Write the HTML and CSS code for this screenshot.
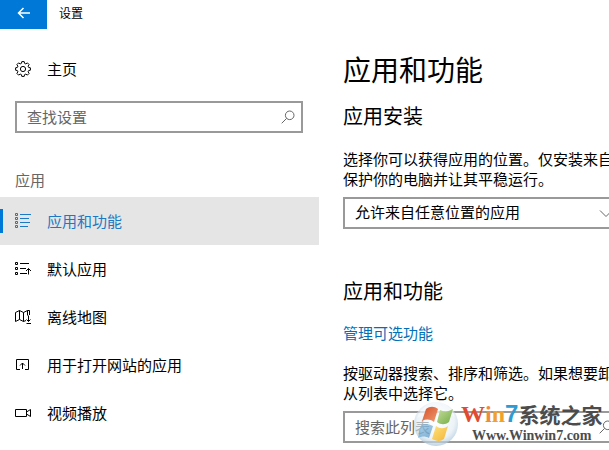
FILE: index.html
```html
<!DOCTYPE html>
<html lang="zh-CN">
<head>
<meta charset="utf-8">
<title>设置</title>
<link rel="stylesheet" href="styles.css">
</head>
<body>
<div class="window">
  <aside class="sidebar">
    <header class="titlebar">
      <button class="back" type="button" aria-label="返回">
        <svg width="14" height="14" viewBox="0 0 14 14"><path d="M13 7H1.500M6.500 2L1.500 7l5 5"/></svg>
      </button>
      <span class="window-title">设置</span>
    </header>
    <a class="nav-item home" href="#">
      <svg class="icon" width="16" height="16" viewBox="0 0 16 16"><path d="M6.800.6h2.400l.4 1.800 1.200.5 1.600-1 1.700 1.700-1 1.600.5 1.200 1.800.4v2.400l-1.800.4-.5 1.200 1 1.600-1.700 1.700-1.600-1-1.200.5-.4 1.800H6.800l-.4-1.800-1.200-.5-1.600 1-1.700-1.700 1-1.600-.5-1.200-1.800-.4V6.800l1.800-.4.5-1.200-1-1.600 1.700-1.700 1.600 1 1.200-.5z"/><circle cx="8" cy="8" r="2.600"/></svg>
      <span>主页</span>
    </a>
    <div class="field find">
      <input type="text" placeholder="查找设置" aria-label="查找设置">
      <svg class="field-icon" width="14" height="14" viewBox="0 0 14 14"><circle cx="8.700" cy="5.300" r="4.300"/><path d="M5.700 8.300L.7 13.300"/></svg>
    </div>
    <h3 class="group">应用</h3>
    <nav>
      <a class="nav-item active" href="#" aria-current="page">
        <svg class="icon" width="16" height="16" viewBox="0 0 16 16"><path d="M.5.5h2v2h-2zM.5 4.500h2v2h-2zM.5 8.500h2v2h-2zM.5 12.500h2v2h-2zM5 1.500H16M5 5.500h9M5 9.500h10M5 13.500h8"/></svg>
        <span>应用和功能</span>
      </a>
      <a class="nav-item" href="#">
        <svg class="icon" width="16" height="16" viewBox="0 0 16 16"><path d="M.5 1.500h2v2h-2zM.5 6.500h2v2h-2zM.5 11.500h2v2h-2zM5 2.500h9M5 7.500h6M5 12.500h7M13.500 13.500v-6M11 10l2.500-2.500L16 10"/></svg>
        <span>默认应用</span>
      </a>
      <a class="nav-item" href="#">
        <svg class="icon" width="16" height="16" viewBox="0 0 16 16"><path d="M11 11.500L8.500 12.500l-4-2-4 2v-9l4-2 4 2 4-2v5M4.500 1.500v9M8.500 3.500v9M13.500 6.500v6M14.500 6V1.500h-2M11.500 10.500l2 2 2-2M11.500 14.500H16"/></svg>
        <span>离线地图</span>
      </a>
      <a class="nav-item" href="#">
        <svg class="icon" width="16" height="16" viewBox="0 0 16 16"><path d="M5 12.500H1.500v-10h12v10H10M7.500 12v-6M5 8.500L7.500 6 10 8.500"/></svg>
        <span>用于打开网站的应用</span>
      </a>
      <a class="nav-item" href="#">
        <svg class="icon" width="16" height="16" viewBox="0 0 16 16"><path d="M.5 4.500h11v7H.5zM11.500 7l4-2.500v7l-4-2.500"/></svg>
        <span>视频播放</span>
      </a>
    </nav>
  </aside>
  <main class="content">
    <h1>应用和功能</h1>
    <section class="install">
      <h2><label for="source">应用安装</label></h2>
      <p>选择你可以获得应用的位置。仅安装来自<br>保护你的电脑并让其平稳运行。</p>
      <div class="field">
        <select id="source"><option>允许来自任意位置的应用</option></select>
        <svg class="field-icon" width="14" height="14" viewBox="0 0 14 14"><path d="M1 4.500l6 6 6-6"/></svg>
      </div>
    </section>
    <section class="features">
      <h2>应用和功能</h2>
      <a class="link" href="#">管理可选功能</a>
      <p>按驱动器搜索、排序和筛选。如果想要卸<br>从列表中选择它。</p>
      <div class="field">
        <input type="text" placeholder="搜索此列表" aria-label="搜索此列表">
        <svg class="field-icon" width="14" height="14" viewBox="0 0 14 14"><circle cx="8.700" cy="5.300" r="4.300"/><path d="M5.700 8.300L.7 13.300"/></svg>
      </div>
    </section>
  </main>
  <div class="watermark">
    <svg class="orb" width="48" height="48" viewBox="0 0 48 48">
      <defs>
        <radialGradient id="glass" cx="50%" cy="42%" r="60%"><stop offset="0" stop-color="#fff" stop-opacity=".5"/><stop offset=".7" stop-color="#dfeaf2" stop-opacity=".6"/><stop offset="1" stop-color="#9fbfd6" stop-opacity=".75"/></radialGradient>
        <linearGradient id="red" x2="1" y2="1"><stop offset="0" stop-color="#d4512b"/><stop offset="1" stop-color="#f09a70"/></linearGradient>
        <linearGradient id="green" x2="1" y2="1"><stop offset="0" stop-color="#c5dc9c"/><stop offset="1" stop-color="#72ad43"/></linearGradient>
        <linearGradient id="blue" x2="1" y2="1"><stop offset="0" stop-color="#80bce2"/><stop offset="1" stop-color="#357fb8"/></linearGradient>
        <linearGradient id="yellow" x2="1" y2="1"><stop offset="0" stop-color="#ffe27a"/><stop offset="1" stop-color="#f2b53b"/></linearGradient>
      </defs>
      <circle cx="23" cy="24" r="22" fill="url(#glass)"/>
      <path d="M4 18C8 7 17 2 24 2s16 6 18 15C33 12 16 12 4 18z" fill="#fff" opacity=".4"/>
      <path d="M13 9c4-3 8-3 12 0l-4 13c-4-3-8-3-12-1z" fill="url(#red)"/>
      <path d="M27 10c4 2 8 2 13-1l-4 13c-4 3-8 3-12 0z" fill="url(#green)"/>
      <path d="M8 25c4-2 8-1 12 1l-4 12c-4-2-7-2-11 0z" fill="url(#blue)" opacity=".6"/>
      <path d="M23 26c4 3 8 3 12 0l-4 13c-4 3-8 2-12 0z" fill="url(#yellow)"/>
    </svg>
    <div class="brand">
      <div class="brand-name"><span class="brand-w">W</span><span class="brand-i">i</span><span class="brand-n">n</span><span class="brand-seven">7</span><span class="brand-cn">系统之家</span></div>
      <div class="brand-url">Www.Winwin7.com</div>
    </div>
  </div>
</div>
</body>
</html>
```
FILE: styles.css
```css
* {
  box-sizing: border-box;
}

body {
  margin: 0;
  overflow: hidden;
  background: #fff;
  color: #000;
  font: 15px/20px "Noto Sans CJK SC", sans-serif;
}

h1, h2, h3, p {
  margin: 0;
  font-weight: 400;
}

svg {
  flex: none;
  fill: none;
  stroke: currentColor;
}

.window {
  position: relative;
  display: grid;
  grid-template-columns: minmax(200px, 319px) minmax(0, 1fr);
  min-height: 100vh;
}

.titlebar {
  display: flex;
  align-items: center;
  gap: 12px;
  margin-bottom: 16px;
}

.back {
  display: grid;
  place-items: center;
  width: 47px;
  height: 29px;
  padding: 0 0 4px;
  border: 0;
  background: #0078d7;
  color: #fff;
}

.back svg {
  stroke-width: 1.5;
}

.window-title {
  padding-bottom: 4px;
  font-size: 12px;
}

.nav-item {
  display: flex;
  align-items: center;
  gap: 16px;
  height: 48px;
  padding-left: 15px;
  color: #000;
  text-decoration: none;
}

.nav-item.active {
  background: #e5e5e5;
  box-shadow: inset 0 12px #e5e5e5, inset 0 -12px #e5e5e5, inset 3px 0 #0078d7;
  color: #1c79c4;
}

.field {
  display: flex;
  align-items: center;
  position: relative;
  height: 32px;
  border: 2px solid #999;
  color: #000;
}

.field input,
.field select {
  width: 100%;
  height: 28px;
  padding: 0 32px 2px 10px;
  border: 0;
  outline: 0;
  background: transparent;
  color: inherit;
  font: inherit;
  appearance: none;
}

.field input::placeholder {
  color: #666;
  opacity: 1;
}

.field-icon {
  position: absolute;
  right: 6px;
  color: #666;
  pointer-events: none;
}

.find {
  margin: 8px 16px 0 15px;
}

.group {
  margin: 37px 0 7px;
  padding-left: 15px;
  color: #666;
  font-size: 15px;
}

.content {
  padding: 49px 0 0 24px;
  overflow: hidden;
  white-space: nowrap;
}

h1 {
  margin-bottom: 12px;
  font-size: 28px;
  line-height: 40px;
}

h2 {
  font-size: 20px;
  line-height: 30px;
}

.content .field {
  margin: 8px -12px 0 0;
}

.install p {
  margin-top: 18px;
}

.features {
  margin-top: 47px;
}

.link {
  display: block;
  margin: 17px 0 20px;
  color: #0070b8;
  text-decoration: none;
}

.watermark {
  position: absolute;
  left: 413px;
  top: 400px;
  display: flex;
  pointer-events: none;
}

.orb {
  stroke: none;
}

.brand {
  color: #4c4c4c;
  font-family: "Liberation Serif", serif;
  font-weight: 700;
  white-space: nowrap;
}

.brand-name {
  display: flex;
  font-size: 24px;
  line-height: 28px;
}

.brand-w { color: #e14b32; }
.brand-i { color: #f08a3c; }
.brand-n { color: #f0a02d; }
.brand-seven {
  color: #2f9bd2;
  font-family: "Liberation Sans", sans-serif;
}

.brand-cn {
  font-family: "Noto Sans CJK SC", sans-serif;
  font-size: 21px;
}

.brand-url {
  padding-left: 11px;
  font-size: 14px;
  line-height: 16px;
}
```
